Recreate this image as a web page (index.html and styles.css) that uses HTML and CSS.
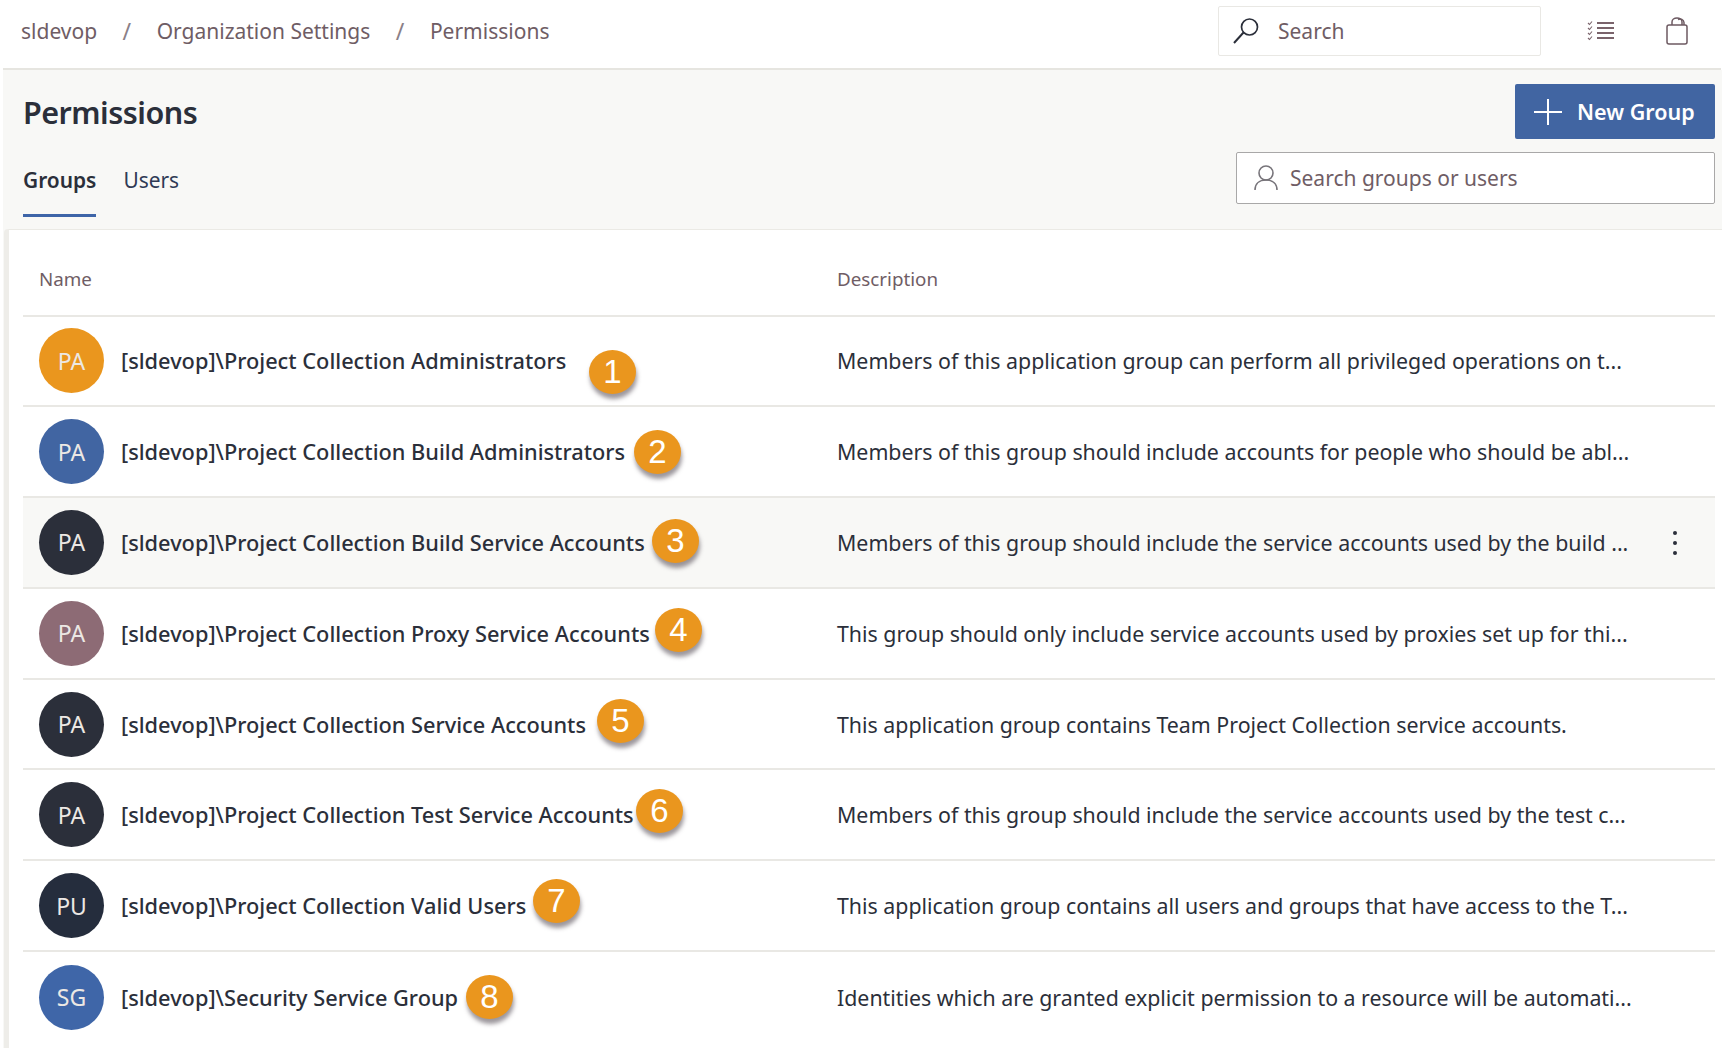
FILE: index.html
```html
<!DOCTYPE html>
<html lang="en">
<head>
    <meta charset="UTF-8">
    <meta name="viewport" content="width=device-width, initial-scale=1.0">
    <title>Permissions - Organization Settings</title>
    <link rel="stylesheet" href="styles.css">
</head>
<body>
    <header class="topbar">
        <nav class="crumbs">
            <span>sldevop</span>
            <span class="sep">/</span>
            <span>Organization Settings</span>
            <span class="sep">/</span>
            <span>Permissions</span>
        </nav>
        <div class="top-search">
            <svg class="top-search-icon" width="28" height="28" viewBox="0 0 28 28" fill="none" stroke="#2b2f3a" stroke-width="1.7">
                <circle cx="17.5" cy="10" r="8"/>
                <path d="M11.5 15.5 L2 26" stroke-width="2"/>
            </svg>
            <span>Search</span>
        </div>
        <svg class="top-icon list-icon" width="28" height="22" viewBox="0 0 28 22" fill="none" stroke="#7a636b" stroke-width="1.5">
            <path d="M10 3h17M10 8h17M10 13h17M10 18h17" stroke-width="2"/>
            <path d="M1 3l1.5 1.5L5 1.5M1 8l1.5 1.5L5 6.500M1 13l1.500 1.500L5 11.500M1 18l1.500 1.500L5 16.500" stroke-width="1.100"/>
        </svg>
        <svg class="top-icon bag-icon" width="24" height="28" viewBox="0 0 24 28" fill="none" stroke="#6d5a62" stroke-width="1.500">
            <rect x="2" y="8" width="20" height="19" rx="2"/>
            <path d="M7 8V5a5 4 0 0 1 10 0v3"/>
            <path d="M13 2.500a4 4 0 0 1 6 3v2.500"/>
        </svg>
    </header>

    <main class="page">
        <div class="page-head">
            <div>
                <h1>Permissions</h1>
                <div class="tabs">
                    <span class="tab active">Groups</span>
                    <span class="tab">Users</span>
                </div>
            </div>
            <div class="head-actions">
                <button class="new-group">
                    <svg width="28" height="26" viewBox="0 0 28 26" stroke="#fff" stroke-width="2"><path d="M0 13h28M14 0v26"/></svg>
                    New Group
                </button>
                <div class="group-search">
                    <svg width="24" height="26" viewBox="0 0 24 26" fill="none" stroke="#77747a" stroke-width="1.600">
                        <circle cx="12" cy="8" r="7"/>
                        <path d="M1 25c0-6 4-10 11-10s11 4 11 10"/>
                    </svg>
                    <span>Search groups or users</span>
                </div>
            </div>
        </div>

        <section class="card">
            <div class="row head-row">
                <div class="col-name">Name</div>
                <div class="col-desc">Description</div>
            </div>

            <div class="row">
                <div class="avatar orange">PA</div>
                <div class="name">[sldevop]\Project Collection Administrators</div>
                <div class="desc">Members of this application group can perform all privileged operations on t...</div>
                <div class="badge b1">1</div>
            </div>
            <div class="row">
                <div class="avatar blue">PA</div>
                <div class="name">[sldevop]\Project Collection Build Administrators</div>
                <div class="desc">Members of this group should include accounts for people who should be abl...</div>
                <div class="badge b2">2</div>
            </div>
            <div class="row hover">
                <div class="avatar dark">PA</div>
                <div class="name">[sldevop]\Project Collection Build Service Accounts</div>
                <div class="desc">Members of this group should include the service accounts used by the build ...</div>
                <div class="more"><i></i><i></i><i></i></div>
                <div class="badge b3">3</div>
            </div>
            <div class="row">
                <div class="avatar mauve">PA</div>
                <div class="name">[sldevop]\Project Collection Proxy Service Accounts</div>
                <div class="desc">This group should only include service accounts used by proxies set up for thi...</div>
                <div class="badge b4">4</div>
            </div>
            <div class="row">
                <div class="avatar dark">PA</div>
                <div class="name">[sldevop]\Project Collection Service Accounts</div>
                <div class="desc">This application group contains Team Project Collection service accounts.</div>
                <div class="badge b5">5</div>
            </div>
            <div class="row">
                <div class="avatar dark">PA</div>
                <div class="name">[sldevop]\Project Collection Test Service Accounts</div>
                <div class="desc">Members of this group should include the service accounts used by the test c...</div>
                <div class="badge b6">6</div>
            </div>
            <div class="row">
                <div class="avatar navy">PU</div>
                <div class="name">[sldevop]\Project Collection Valid Users</div>
                <div class="desc">This application group contains all users and groups that have access to the T...</div>
                <div class="badge b7">7</div>
            </div>
            <div class="row last">
                <div class="avatar blue2">SG</div>
                <div class="name">[sldevop]\Security Service Group</div>
                <div class="desc">Identities which are granted explicit permission to a resource will be automati...</div>
                <div class="badge b8">8</div>
            </div>
        </section>
    </main>
</body>
</html>
```

FILE: styles.css
```css
* {
    box-sizing: border-box;
}

html, body {
    height: 100%;
}

body {
    margin: 0;
    background-color: #fff;
    font-family: 'Noto Sans', 'Open Sans', sans-serif;
    color: #2b2f3a;
    overflow: hidden;
}

.topbar {
    height: 70px;
    display: flex;
    align-items: center;
    padding: 0 0 6px 21px;
    margin-left: 3px;
    margin-right: 4px;
    padding-left: 18px;
    border-bottom: 2px solid #e6e5e0;
}

.crumbs {
    display: flex;
    font-size: 21px;
    color: #6f5d65;
    flex: 1;
}

.sep {
    margin: 0 25.5px;
    font-size: 23px;
    line-height: 28px;
    color: #8a8088;
}

.top-search {
    width: 323px;
    height: 50px;
    margin-right: 46px;
    border: 1px solid #e9e8e4;
    border-radius: 2px;
    display: flex;
    align-items: center;
    gap: 18px;
    padding-left: 13px;
    font-size: 21px;
    color: #6f5d65;
}

.top-icon {
    flex: none;
}

.list-icon {
    margin-right: 50px;
}

.bag-icon {
    margin-right: 32px;
}

.page {
    margin-left: 3px;
    margin-right: 3px;
    height: 978px;
    background-color: #f8f8f6;
    display: flex;
    flex-direction: column;
}

.page-head {
    height: 159px;
    display: flex;
    justify-content: space-between;
    padding: 14px 7px 0 20px;
}

h1 {
    margin: 0;
    padding-top: 3px;
    font-size: 30.5px;
    line-height: 50px;
    font-weight: 600;
    letter-spacing: -0.5px;
    color: #2b2f3a;
}

.tabs {
    display: flex;
    gap: 27px;
    margin-top: 20px;
}

.tab {
    height: 60px;
    font-size: 20.9px;
    line-height: 46px;
    color: #2f3a55;
}

.tab.active {
    font-weight: 600;
    color: #2b2f3a;
    border-bottom: 3px solid #3e65a8;
}

.head-actions {
    width: 479px;
    display: flex;
    flex-direction: column;
    align-items: flex-end;
    gap: 13px;
}

.new-group {
    width: 200px;
    height: 55px;
    background-color: #4165a2;
    color: #fff;
    border: none;
    border-radius: 2px;
    display: flex;
    align-items: center;
    gap: 15px;
    padding-left: 19px;
    font-family: inherit;
    font-size: 21.5px;
    font-weight: 600;
}

.group-search {
    width: 100%;
    height: 52px;
    background-color: #fff;
    border: 1px solid #a9a8a8;
    border-radius: 2px;
    display: flex;
    align-items: center;
    gap: 12px;
    padding-left: 17px;
    font-size: 21px;
    color: #6f5d65;
}

.card {
    flex: 1;
    margin-left: 1px;
    padding: 0 7px 0 14px;
    background-color: #fff;
    border-left: 5px solid #eeede9;
    border-top: 1px solid #ebeae5;
    border-top-left-radius: 4px;
}

.row {
    position: relative;
    height: 90.8px;
    display: flex;
    align-items: center;
    padding-left: 16px;
    border-bottom: 2px solid #e9e8e4;
}

.row.last {
    border-bottom: none;
}

.row.hover {
    background-color: #f8f8f6;
}

.head-row {
    height: 86.500px;
    padding-bottom: 2px;
    padding-top: 16px;
    font-size: 18.8px;
    color: #6f5d65;
}

.col-name {
    width: 798px;
}

.avatar {
    width: 65px;
    height: 65px;
    flex: none;
    border-radius: 50%;
    display: flex;
    align-items: center;
    justify-content: center;
    font-size: 23px;
    color: #ece8e4;
}

.orange { background-color: #ea961e; }
.blue { background-color: #4165a2; }
.dark { background-color: #2b2f3a; }
.mauve { background-color: #8d6b75; }
.navy { background-color: #252d3d; }
.blue2 { background-color: #3f66a8; }

.name {
    width: 733px;
    flex: none;
    padding-left: 17px;
    font-size: 21.75px;
    font-weight: 500;
    color: #2b2f3a;
    white-space: nowrap;
}

.desc {
    font-size: 21.35px;
    color: #2b2f3a;
    white-space: nowrap;
}

.more {
    position: absolute;
    left: 1650px;
    top: 33px;
    display: flex;
    flex-direction: column;
    gap: 6px;
}

.more i {
    width: 4px;
    height: 4px;
    border-radius: 50%;
    background-color: #2b2f3a;
}

/* callouts added on top of the screenshot */
.badge {
    position: absolute;
    width: 47px;
    height: 44px;
    border-radius: 50%;
    background-color: #ea961e;
    color: #fff;
    font-family: 'Liberation Sans', sans-serif;
    font-size: 33px;
    display: flex;
    align-items: center;
    justify-content: center;
    box-shadow: 1px 5px 4px rgba(60, 50, 60, 0.5);
}

.b1 { left: 566px; top: 33px; }
.b2 { left: 611px; top: 23px; }
.b3 { left: 629px; top: 21px; }
.b4 { left: 632px; top: 19px; }
.b5 { left: 574px; top: 19px; }
.b6 { left: 613px; top: 19px; }
.b7 { left: 510px; top: 18px; }
.b8 { left: 443px; top: 23px; }
```
